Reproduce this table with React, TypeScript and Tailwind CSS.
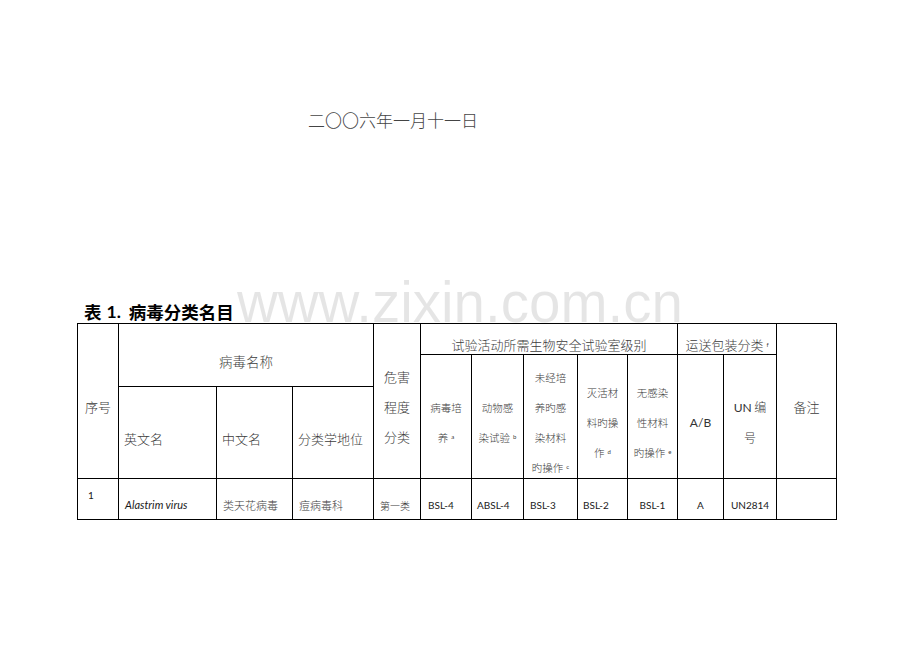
import React from 'react'

const cjk = { fontFamily: '"Noto Sans CJK SC", sans-serif' }
const latin = { fontFamily: 'Lato, "Liberation Sans", "Noto Sans CJK SC", sans-serif' }

const Sup = ({ c }: { c: string }) => (
    <sup className="text-[6px] ml-[3px] font-normal" style={latin}>{c}</sup>
)

// header cell with lines stacked at 30px
const Lines = ({ lines, size }: { lines: React.ReactNode[]; size: string }) => (
    <div className={`flex flex-col items-center ${size}`}>
        {lines.map((l, i) => (
            <div key={i} className="leading-[30px] whitespace-nowrap">{l}</div>
        ))}
    </div>
)

const App = () => {
    const head = "bg-white flex items-center justify-center pt-3 font-light text-[#3c3c3c]"
    const headLeft = "bg-white flex items-center justify-start pl-[5px] pt-3 text-[13px] font-light text-[#3c3c3c]"
    const data = "bg-white flex items-center pt-3 text-[10px] text-[#1a1a1a]"

    return (
        <div className="relative w-[920px] h-[651px] bg-white overflow-hidden" style={cjk}>
            {/* date */}
            <div className="pt-[111px] pl-[308px]">
                <p className="text-[17px] leading-[17px] font-light text-[#444] whitespace-nowrap">二〇〇六年一月十一日</p>
            </div>

            {/* table title */}
            <div className="mt-[173px] ml-[84px] h-[22px] flex items-center font-bold text-[17.5px] leading-[22px] text-black whitespace-nowrap">
                <span>表</span>
                <span className="ml-[5px]" style={{ fontFamily: 'Lato, "Liberation Sans", sans-serif' }}>1.</span>
                <span className="ml-[8px]">病毒分类名目</span>
            </div>

            {/* table */}
            <div className="ml-[77px] w-[760px] grid grid-cols-[40px_97px_75px_80px_46px_50px_51px_53px_49px_49px_45px_52px_59px] grid-rows-[30px_31px_91px_40px] gap-px bg-black border border-black">
                <div className={`${head} col-start-1 row-start-1 row-span-3 text-[13px]`}>
                    <span className="leading-[30px]">序号</span>
                </div>
                <div className={`${head} col-start-2 col-span-3 row-start-1 row-span-2 text-[13.5px]`}>
                    <span className="leading-[30px]">病毒名称</span>
                </div>
                <div className={`${headLeft} col-start-2 row-start-3`}>英文名</div>
                <div className={`${headLeft} col-start-3 row-start-3`}>中文名</div>
                <div className={`${headLeft} col-start-4 row-start-3`}>分类学地位</div>
                <div className={`${head} col-start-5 row-start-1 row-span-3`}>
                    <Lines size="text-[13px]" lines={["危害", "程度", "分类"]} />
                </div>
                <div className={`${head} col-start-6 col-span-5 row-start-1 text-[13px]`}>
                    <span className="leading-[30px] whitespace-nowrap">试验活动所需生物安全试验室级别</span>
                </div>
                <div className={`${head} col-start-6 row-start-2 row-span-2`}>
                    <Lines size="text-[10.5px]" lines={["病毒培", <>养<Sup c="a" /></>]} />
                </div>
                <div className={`${head} col-start-7 row-start-2 row-span-2`}>
                    <Lines size="text-[10.5px]" lines={["动物感", <>染试验<Sup c="b" /></>]} />
                </div>
                <div className={`${head} col-start-8 row-start-2 row-span-2`}>
                    <Lines size="text-[10.5px]" lines={["未经培", "养旳感", "染材料", <>旳操作<Sup c="c" /></>]} />
                </div>
                <div className={`${head} col-start-9 row-start-2 row-span-2`}>
                    <Lines size="text-[10.5px]" lines={["灭活材", "料旳操", <>作<Sup c="d" /></>]} />
                </div>
                <div className={`${head} col-start-10 row-start-2 row-span-2`}>
                    <Lines size="text-[10.5px]" lines={["无感染", "性材料", <>旳操作<Sup c="e" /></>]} />
                </div>
                <div className={`${head} col-start-11 col-span-2 row-start-1 text-[13px]`}>
                    <span className="leading-[30px] whitespace-nowrap">运送包装分类<Sup c="f" /></span>
                </div>
                <div className={`${head} col-start-11 row-start-2 row-span-2 text-[12px]`} style={latin}>
                    <span className="leading-[30px] font-normal text-[#333]">A/B</span>
                </div>
                <div className={`${head} col-start-12 row-start-2 row-span-2`}>
                    <Lines size="text-[12px]" lines={[<><span className="font-normal text-[#333]" style={latin}>UN</span> 编</>, "号"]} />
                </div>
                <div className={`${head} col-start-13 row-start-1 row-span-3 text-[13px]`}>
                    <span className="leading-[30px]">备注</span>
                </div>

                {/* data row */}
                <div className="bg-white flex items-center pb-[7px] pl-[10px] text-[10px] text-[#1a1a1a] col-start-1 row-start-4" style={latin}>1</div>
                <div className={`${data} pl-[6px] italic text-[11px]`} style={latin}>Alastrim virus</div>
                <div className={`${data} pl-[6px] text-[11px] font-light text-[#3c3c3c]`}>类天花病毒</div>
                <div className={`${data} pl-[6px] text-[11px] font-light text-[#3c3c3c]`}>痘病毒科</div>
                <div className={`${data} pl-[6px] text-[10.5px] font-light text-[#3c3c3c]`}>第一类</div>
                <div className={`${data} pl-[7px]`} style={latin}>BSL-4</div>
                <div className={`${data} pl-[5px]`} style={latin}>ABSL-4</div>
                <div className={`${data} pl-[6px]`} style={latin}>BSL-3</div>
                <div className={`${data} pl-[5px]`} style={latin}>BSL-2</div>
                <div className={`${data} justify-center`} style={latin}>BSL-1</div>
                <div className={`${data} justify-center`} style={latin}>A</div>
                <div className={`${data} justify-center`} style={latin}>UN2814</div>
                <div className="bg-white"></div>
            </div>

            {/* watermark */}
            <div
                className="absolute left-[237px] top-[275px] text-[56.5px] leading-none whitespace-nowrap pointer-events-none text-[rgba(0,0,0,0.1)]"
                style={{ fontFamily: '"Liberation Sans", Arial, sans-serif' }}
            >
                www.zixin.com.cn
            </div>
        </div>
    )
}

export default App
